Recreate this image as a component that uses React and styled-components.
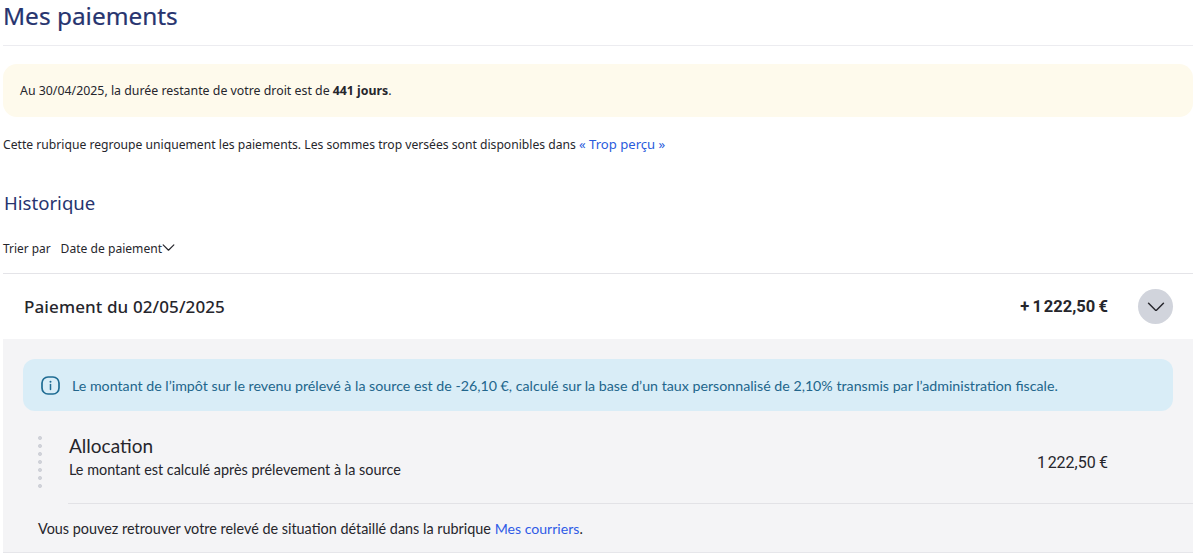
import React from "react";
import styled, { createGlobalStyle } from "styled-components";

const Global = createGlobalStyle`
  html, body { margin: 0; padding: 0; background: #fff; }
  body { font-family: "Noto Sans", "Open Sans", Arial, sans-serif; color: #26262c; overflow: hidden; }
  * { box-sizing: border-box; }
`;
const Page = styled.main`
  width: 1190px;
  margin-left: 3px;
  display: flex;
  flex-direction: column;
`;
const Title = styled.h1`
  margin: 0;
  height: 46px;
  border-bottom: 1px solid #ececf0;
  font-size: 24.4px;
  line-height: 31px;
  font-weight: 400;
  -webkit-text-stroke: 0.2px #27346f;
  color: #27346f;
`;
const Notice = styled.div`
  margin-top: 18px;
  height: 53px;
  padding: 0 17px;
  display: flex;
  align-items: center;
  background: #fefaec;
  border-radius: 14px;
  font-size: 12.35px;
  b { font-weight: 700; margin-left: 0.25em; }
`;
const Intro = styled.p`
  margin: 18px 0 0;
  height: 18px;
  font-size: 12.15px;
  line-height: 18px;
  a { color: #2a5bdc; text-decoration: none; font-size: 13.1px; }
`;
const SectionTitle = styled.h2`
  margin: 37px 0 0;
  height: 26px;
  padding-left: 1px;
  font-size: 18.6px;
  line-height: 26px;
  font-weight: 400;
  color: #27346f;
`;
const SortBar = styled.div`
  margin-top: 20px;
  height: 38px;
  padding-bottom: 13px;
  display: flex;
  align-items: center;
  font-size: 11.9px;
  border-bottom: 1px solid #e4e4e8;
`;
const SortValue = styled.span`
  margin-left: 10px;
  display: flex;
  align-items: center;
  font-size: 12.1px;
`;
const Row = styled.div`
  height: 65px;
  padding: 0 20px 0 21px;
  display: flex;
  align-items: center;
  justify-content: space-between;
`;
const RowTitle = styled.div`
  font-size: 17.05px;
  font-weight: 500;
  letter-spacing: 0.1px;
`;
const RowRight = styled.div`
  display: flex;
  align-items: center;
  gap: 30px;
`;
const Amount = styled.span`
  font-family: Roboto, Arial, sans-serif;
  font-size: 16.5px;
  font-weight: 700;
`;
const RoundButton = styled.button`
  width: 35px;
  height: 35px;
  padding: 0;
  border: 0;
  border-radius: 50%;
  background: #d1d4dc;
  display: grid;
  place-items: center;
`;
const Details = styled.section`
  height: 214px;
  padding-top: 20px;
  background: #f4f4f6;
  border-bottom: 1px solid #e6e6ea;
  display: flex;
  flex-direction: column;
  font-family: Lato, "Noto Sans", sans-serif;
`;
const InfoBox = styled.div`
  margin: 0 20px;
  height: 52px;
  padding: 0 17px 0 18px;
  display: flex;
  align-items: center;
  gap: 12px;
  background: #d9edf7;
  border-radius: 12px;
  font-size: 14.23px;
  color: #22668c;
`;
const Allocation = styled.div`
  margin-top: 24px;
  height: 68px;
  padding-left: 35px;
  display: flex;
  justify-content: space-between;
`;
const Dots = styled.span`
  width: 4px;
  height: 56px;
  margin-top: -1px;
  background: radial-gradient(circle, #d0d2d9 1.9px, transparent 2.2px) 0 0 / 4px 8px repeat-y;
`;
const AllocBody = styled.div`
  flex: 1;
  margin-left: 27px;
`;
const AllocTitle = styled.div`
  font-size: 19px;
  line-height: 22px;
`;
const AllocSub = styled.div`
  margin-top: 4px;
  font-size: 14.4px;
  line-height: 18px;
`;
const AllocAmount = styled.div`
  font-family: Roboto, Arial, sans-serif;
  font-size: 16px;
  margin: 18px 85px 0 0;
`;
const Sep = styled.hr`
  margin: 0 0 0 65px;
  border: 0;
  border-top: 1px solid #e2e2e6;
`;
const Footer = styled.p`
  margin: 16px 0 0 35px;
  font-size: 14.4px;
  line-height: 18px;
  a { color: #2f5be6; text-decoration: none; font-size: 14.1px; }
`;
const Chevron = ({ w = 14, sw = 1.3 }) => (
  <svg width={w} height={w * 0.55} viewBox="0 0 14 8" fill="none" stroke="#26262c" strokeWidth={sw} strokeLinecap="round" strokeLinejoin="round">
    <path d="M1 1l6 6 6-6" />
  </svg>
);

export default function App() {
  return (
    <Page>
      <Global />
      <Title>Mes paiements</Title>
      <Notice>Au 30/04/2025, la durée restante de votre droit est de <b>441 jours</b>.</Notice>
      <Intro>Cette rubrique regroupe uniquement les paiements. Les sommes trop versées sont disponibles dans <a href="#t">« Trop perçu »</a></Intro>
      <SectionTitle>Historique</SectionTitle>
      <SortBar>Trier par<SortValue>Date de paiement<Chevron w={13} /></SortValue></SortBar>
      <Row>
        <RowTitle>Paiement du 02/05/2025</RowTitle>
        <RowRight>
          <Amount>+{"\u2009"}1{"\u200a"}222,50{"\u2009"}€</Amount>
          <RoundButton aria-label="Replier"><Chevron w={18} sw={1.2} /></RoundButton>
        </RowRight>
      </Row>
      <Details>
        <InfoBox>
          <svg width="19" height="19" viewBox="0 0 19 19" fill="none">
            <rect x="1" y="1" width="17" height="17" rx="6" stroke="#1f6c93" strokeWidth="1.7" />
            <path d="M9.5 8.5v5" stroke="#1f6c93" strokeWidth="1.5" strokeLinecap="round" />
            <circle cx="9.5" cy="5.8" r="1" fill="#1f6c93" />
          </svg>
          Le montant de l’impôt sur le revenu prélevé à la source est de -26,10 €, calculé sur la base d’un taux personnalisé de 2,10% transmis par l’administration fiscale.
        </InfoBox>
        <Allocation>
          <Dots />
          <AllocBody>
            <AllocTitle>Allocation</AllocTitle>
            <AllocSub>Le montant est calculé après prélevement à la source</AllocSub>
          </AllocBody>
          <AllocAmount>1{"\u200a"}222,50{"\u2009"}€</AllocAmount>
        </Allocation>
        <Sep />
        <Footer>Vous pouvez retrouver votre relevé de situation détaillé dans la rubrique <a href="#c">Mes courriers</a>.</Footer>
      </Details>
    </Page>
  );
}
